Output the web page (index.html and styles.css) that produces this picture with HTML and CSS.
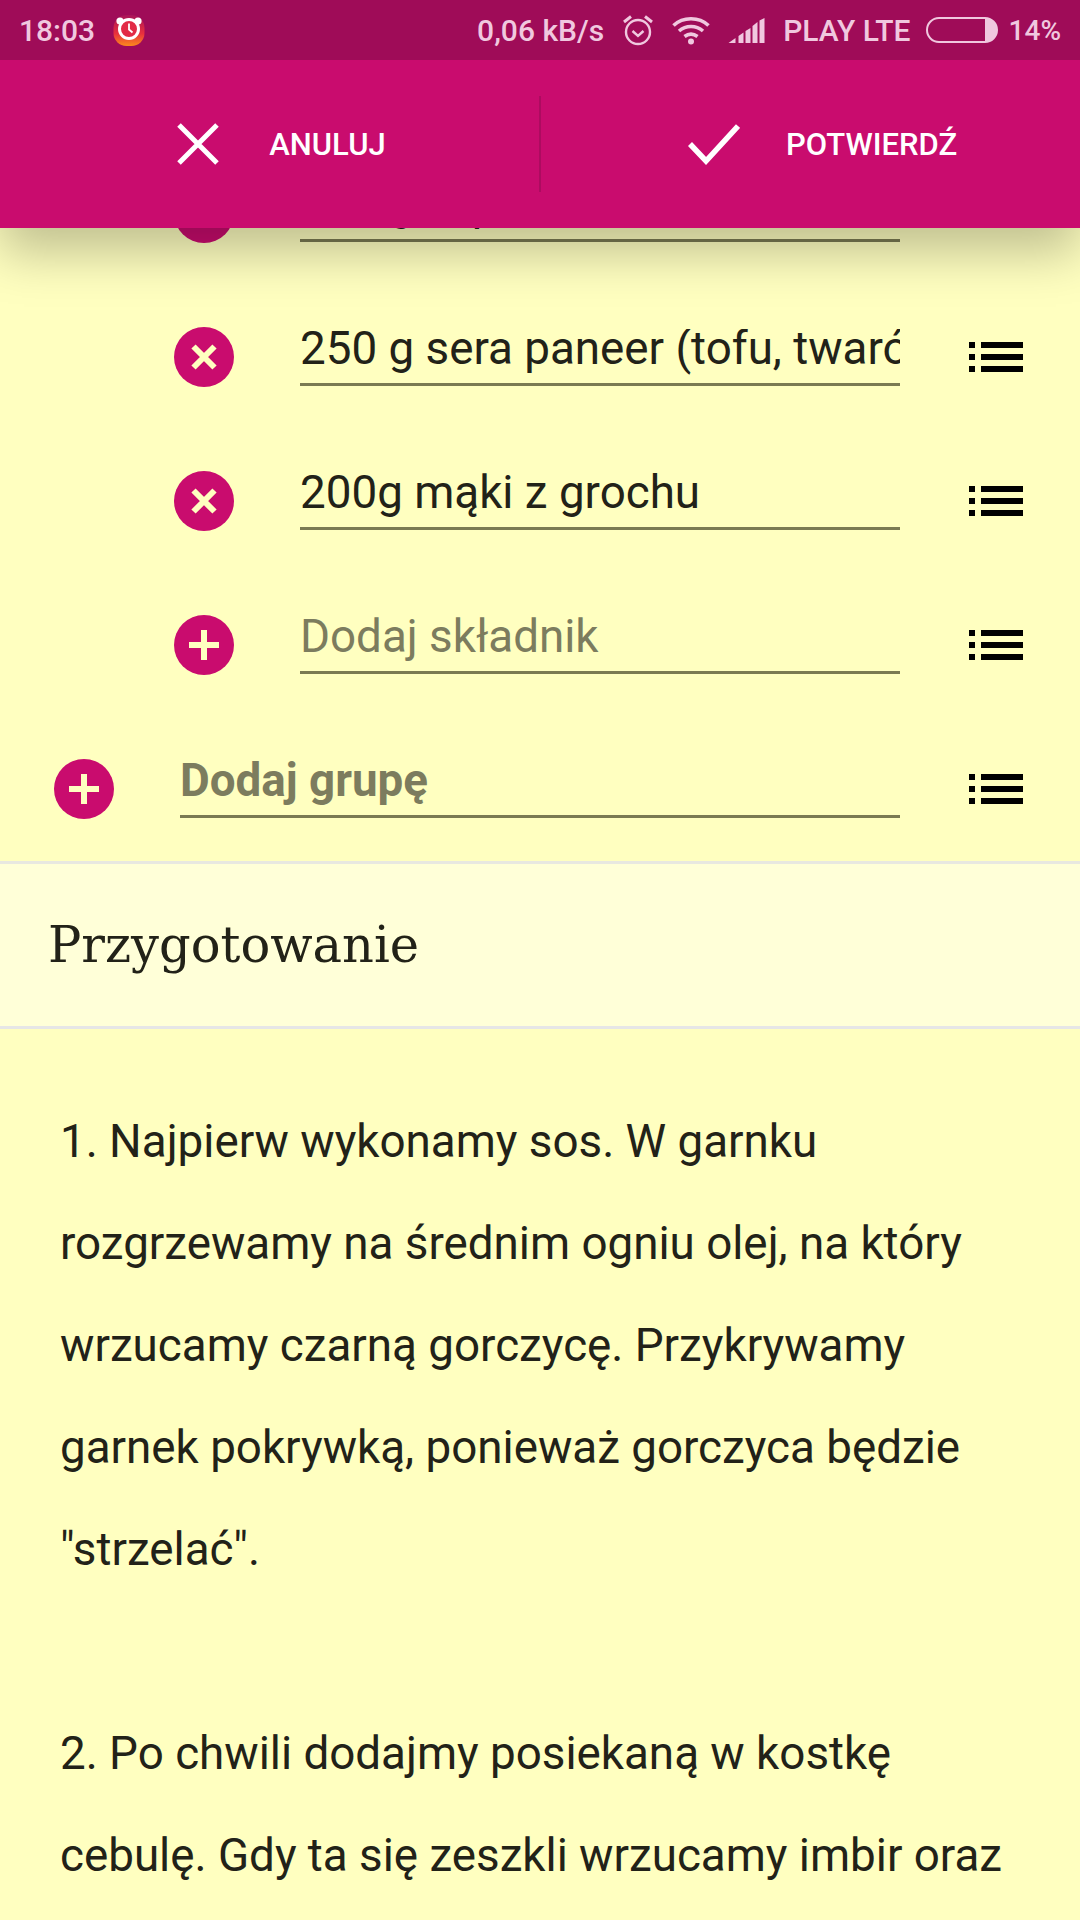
FILE: index.html
```html
<!DOCTYPE html>
<html lang="pl">
<head>
<meta charset="utf-8">
<title>Przepis</title>
<link rel="stylesheet" href="styles.css">
</head>
<body>
<div class="screen">
  <header class="top">
    <div class="status">
      <div class="status-side">
        <span>18:03</span>
        <svg class="alarm-app" viewBox="0 0 32 32">
          <defs><linearGradient id="ag" x1="0" y1="0" x2="0" y2="1"><stop offset="0" stop-color="#a8145a"/><stop offset="0.6" stop-color="#e8303e"/><stop offset="1" stop-color="#fb8a1c"/></linearGradient></defs>
          <rect x="0.500" y="1" width="31" height="31" rx="13" fill="url(#ag)"/>
          <circle cx="7" cy="7" r="3.600" fill="#fff"/><circle cx="25" cy="7" r="3.600" fill="#fff"/>
          <circle cx="16" cy="15" r="9.500" fill="#e22b46" stroke="#fff" stroke-width="3"/>
          <path d="M16 9.500V15.500l3.500 3" fill="none" stroke="#fff" stroke-width="1.800"/>
        </svg>
      </div>
      <div class="status-side status-right">
        <span class="speed">0,06 kB/s</span>
        <svg class="alarm" viewBox="0 0 32 32" fill="none" stroke="#f0c8df" stroke-width="2.400">
          <circle cx="16" cy="18" r="12"/><path d="M10.500 17l5.500 5 5.500-5"/><path d="M2 8l7-5.500M30 8l-7-5.500" stroke-width="3"/>
        </svg>
        <svg class="wifi" viewBox="0 0 38 30" fill="none" stroke="#f0c8df" stroke-width="3.600">
          <path d="M1.500 10.500C11 1.500 27 1.500 36.500 10.500"/><path d="M7 16c7-6 17-6 24 0"/><path d="M12.500 21.500c4-3 9-3 13 0"/><circle cx="19" cy="26.500" r="3" fill="#f0c8df" stroke="none"/>
        </svg>
        <svg class="signal" viewBox="0 0 36 25" fill="#f0c8df">
          <path d="M0 25l7-5v5zM10 18l5-3.500V25h-5zM17 13l5-3V25h-5zM24 8l5-4V25h-5zM31 2.500L36 0V25h-5z"/>
        </svg>
        <span class="carrier">PLAY LTE</span>
        <svg class="battery" viewBox="0 0 72 26">
          <rect x="1" y="1" width="70" height="24" rx="12" fill="none" stroke="#f0c8df" stroke-width="2"/>
          <path d="M59 1a12 12 0 0 1 0 24z" fill="#f0c8df"/>
        </svg>
        <span class="battery-level">14%</span>
      </div>
    </div>
    <div class="actions">
      <div class="action">
        <svg class="action-icon" viewBox="0 0 42 42" fill="none" stroke="#fff" stroke-width="5"><path d="M2 2l38 38M40 2L2 40"/></svg>
        <span>ANULUJ</span>
      </div>
      <div class="action-divider"></div>
      <div class="action">
        <svg class="action-icon action-icon-ok" viewBox="0 0 52 42" fill="none" stroke="#fff" stroke-width="5.500"><path d="M2 21l16 17L50 3"/></svg>
        <span>POTWIERDŹ</span>
      </div>
    </div>
  </header>

  <main class="content">
    <section class="rows">
      <div class="row row-item">
        <button class="round"><svg viewBox="0 0 60 60"><path class="glyph" d="M19.500 19.500l21 21M40.500 19.500l-21 21"/></svg></button>
        <div class="field"><span class="value">500 g szpinaku</span></div>
        <svg class="drag" viewBox="0 0 54 30"><path d="M0 0h6v6H0zM12 0h42v6H12zM0 12h6v6H0zM12 12h42v6H12zM0 24h6v6H0zM12 24h42v6H12z"/></svg>
      </div>
      <div class="row row-item">
        <button class="round"><svg viewBox="0 0 60 60"><path class="glyph" d="M19.500 19.500l21 21M40.500 19.500l-21 21"/></svg></button>
        <div class="field"><span class="value">250 g sera paneer (tofu, twaróg)</span></div>
        <svg class="drag" viewBox="0 0 54 30"><path d="M0 0h6v6H0zM12 0h42v6H12zM0 12h6v6H0zM12 12h42v6H12zM0 24h6v6H0zM12 24h42v6H12z"/></svg>
      </div>
      <div class="row row-item">
        <button class="round"><svg viewBox="0 0 60 60"><path class="glyph" d="M19.500 19.500l21 21M40.500 19.500l-21 21"/></svg></button>
        <div class="field"><span class="value">200g mąki z grochu</span></div>
        <svg class="drag" viewBox="0 0 54 30"><path d="M0 0h6v6H0zM12 0h42v6H12zM0 12h6v6H0zM12 12h42v6H12zM0 24h6v6H0zM12 24h42v6H12z"/></svg>
      </div>
      <div class="row row-item">
        <button class="round"><svg viewBox="0 0 60 60"><path class="glyph" d="M30 15v30M15 30h30"/></svg></button>
        <div class="field"><span class="value placeholder">Dodaj składnik</span></div>
        <svg class="drag" viewBox="0 0 54 30"><path d="M0 0h6v6H0zM12 0h42v6H12zM0 12h6v6H0zM12 12h42v6H12zM0 24h6v6H0zM12 24h42v6H12z"/></svg>
      </div>
      <div class="row row-group">
        <button class="round"><svg viewBox="0 0 60 60"><path class="glyph" d="M30 15v30M15 30h30"/></svg></button>
        <div class="field"><span class="value placeholder bold">Dodaj grupę</span></div>
        <svg class="drag" viewBox="0 0 54 30"><path d="M0 0h6v6H0zM12 0h42v6H12zM0 12h6v6H0zM12 12h42v6H12zM0 24h6v6H0zM12 24h42v6H12z"/></svg>
      </div>
    </section>
    <h2 class="section-title">Przygotowanie</h2>
    <div class="steps">
      <p>1. Najpierw wykonamy sos. W garnku rozgrzewamy na średnim ogniu olej, na który wrzucamy czarną gorczycę. Przykrywamy garnek pokrywką, ponieważ gorczyca będzie "strzelać".</p>
      <p>2. Po chwili dodajmy posiekaną w kostkę cebulę. Gdy ta się zeszkli wrzucamy imbir oraz</p>
    </div>
  </main>
</div>
</body>
</html>
```
FILE: styles.css
```css
* { box-sizing: border-box; }
html, body { margin: 0; padding: 0; }
body { width: 1080px; height: 1920px; overflow: hidden; background: #ffffc0; font-family: Roboto, sans-serif; }
.screen { position: relative; width: 1080px; height: 1920px; overflow: hidden; }

.top { position: absolute; top: 0; left: 0; right: 0; z-index: 2; box-shadow: 0 24px 48px rgba(0,0,0,.25); }
.status { height: 60px; background: #9f0c58; color: #f0c8df; display: flex; justify-content: space-between; align-items: center; padding: 0 19px; font-size: 30px; font-weight: 500; }
.status-side { display: flex; align-items: center; }
.alarm-app { width: 32px; height: 32px; margin-left: 18px; }
.alarm { width: 32px; height: 32px; margin-left: 18px; }
.wifi { width: 38px; height: 30px; margin-left: 18px; }
.signal { width: 37px; height: 25px; margin-left: 18px; }
.carrier { margin-left: 18px; }
.battery { width: 72px; height: 26px; margin-left: 15px; }
.battery-level { margin-left: 11px; font-size: 28px; }

.actions { height: 168px; background: #c90c6e; display: flex; align-items: center; color: #fff; font-size: 31px; font-weight: 500; }
.action { flex: 1; display: flex; align-items: center; justify-content: center; padding-left: 24px; }
.action-icon { width: 42px; height: 42px; margin-right: 50px; }
.action-icon-ok { width: 52px; margin-right: 46px; }
.action-divider { width: 2px; height: 96px; background: #ad0b60; }

.content { padding-top: 141px; }
.row { height: 144px; display: flex; align-items: center; }
.row-item { padding-left: 174px; }
.row-group { padding-left: 54px; }
.round { flex: none; width: 60px; height: 60px; border: 0; padding: 0; border-radius: 50%; background: #c90c6e; }
.round svg { display: block; width: 60px; height: 60px; }
.glyph { fill: none; stroke: #ffffc0; stroke-width: 6; }
.field { flex: none; height: 57px; margin-left: 66px; border-bottom: 3px solid #7a7a52; overflow: hidden; white-space: nowrap; font-size: 45.750px; line-height: 40px; color: #222218; }
.row-item .field { width: 600px; }
.row-group .field { width: 720px; }
.value { display: block; padding-bottom: 12px; }
.placeholder { color: #7c7c5e; }
.bold { font-weight: 700; }
.drag { flex: none; width: 54px; height: 30px; margin-left: 69px; fill: #000; }

.section-title { margin: 0; height: 168px; display: flex; align-items: center; padding-left: 48px; background: #ffffd8; border-top: 3px solid #e8e8e0; border-bottom: 3px solid #e6e6e6; font-family: "DejaVu Serif", serif; font-weight: 400; font-size: 49.500px; color: #222218; }

.steps { padding: 62px 48px 0 60px; font-size: 45.750px; line-height: 102px; color: #222218; }
.steps p { margin: 0 0 102px; }
```
